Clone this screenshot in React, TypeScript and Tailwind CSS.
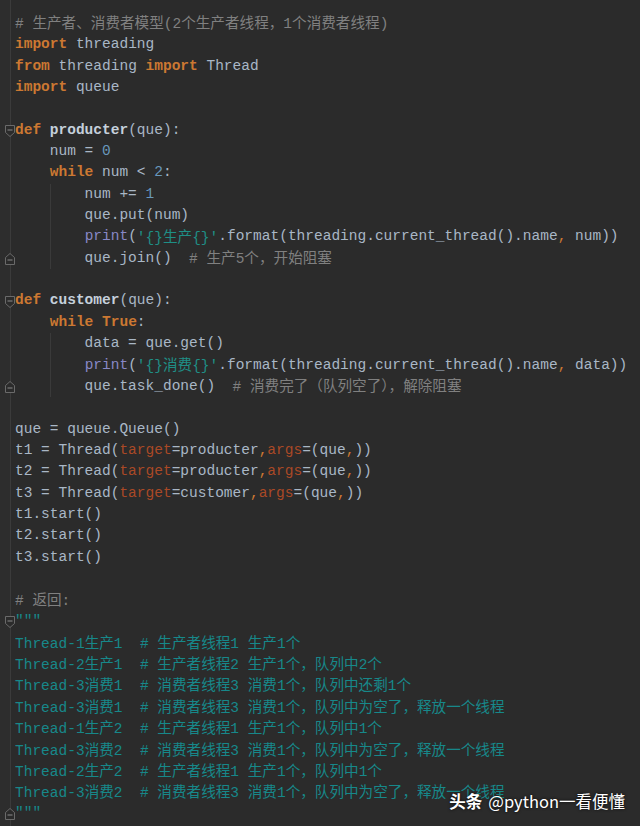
type Tok = [string, string];

// colour classes for the Darcula-like palette
const T = 'text-[#a9b7c6]';
const K = 'text-[#cc7832] font-bold';
const FN = 'text-[#c5d0db] font-bold';
const N = 'text-[#6897bb]';
const C = 'text-[#808080]';
const B = 'text-[#8888c6]';
const S = 'text-[#1f8f86]';
const A = 'text-[#aa4926]';
const D = 'text-[#17888a]';
const P = 'text-[#cc7832]';

const lines: Tok[][] = [
  [[C, '# 生产者、消费者模型(2个生产者线程，1个消费者线程)']],
  [[K, 'import'], [T, ' threading']],
  [[K, 'from'], [T, ' threading '], [K, 'import'], [T, ' Thread']],
  [[K, 'import'], [T, ' queue']],
  [],
  [[K, 'def'], [T, ' '], [FN, 'producter'], [T, '(que):']],
  [[T, '    num = '], [N, '0']],
  [[T, '    '], [K, 'while'], [T, ' num < '], [N, '2'], [T, ':']],
  [[T, '        num += '], [N, '1']],
  [[T, '        que.put(num)']],
  [[T, '        '], [B, 'print'], [T, '('], [S, "'{}生产{}'"], [T, '.format(threading.current_thread().name'], [P, ','], [T, ' num))']],
  [[T, '        que.join()  '], [C, '# 生产5个，开始阻塞']],
  [],
  [[K, 'def'], [T, ' '], [FN, 'customer'], [T, '(que):']],
  [[T, '    '], [K, 'while'], [T, ' '], [K, 'True'], [T, ':']],
  [[T, '        data = que.get()']],
  [[T, '        '], [B, 'print'], [T, '('], [S, "'{}消费{}'"], [T, '.format(threading.current_thread().name'], [P, ','], [T, ' data))']],
  [[T, '        que.task_done()  '], [C, '# 消费完了（队列空了），解除阻塞']],
  [],
  [[T, 'que = queue.Queue()']],
  [[T, 't1 = Thread('], [A, 'target'], [T, '=producter'], [P, ','], [A, 'args'], [T, '=(que'], [P, ','], [T, '))']],
  [[T, 't2 = Thread('], [A, 'target'], [T, '=producter'], [P, ','], [A, 'args'], [T, '=(que'], [P, ','], [T, '))']],
  [[T, 't3 = Thread('], [A, 'target'], [T, '=customer'], [P, ','], [A, 'args'], [T, '=(que'], [P, ','], [T, '))']],
  [[T, 't1.start()']],
  [[T, 't2.start()']],
  [[T, 't3.start()']],
  [],
  [[C, '# 返回:']],
  [[D, '"""']],
  [[D, 'Thread-1生产1  # 生产者线程1 生产1个']],
  [[D, 'Thread-2生产1  # 生产者线程2 生产1个，队列中2个']],
  [[D, 'Thread-3消费1  # 消费者线程3 消费1个，队列中还剩1个']],
  [[D, 'Thread-3消费1  # 消费者线程3 消费1个，队列中为空了，释放一个线程']],
  [[D, 'Thread-1生产2  # 生产者线程1 生产1个，队列中1个']],
  [[D, 'Thread-3消费2  # 消费者线程3 消费1个，队列中为空了，释放一个线程']],
  [[D, 'Thread-2生产2  # 生产者线程1 生产1个，队列中1个']],
  [[D, 'Thread-3消费2  # 消费者线程3 消费1个，队列中为空了，释放一个线程']],
  [[D, '"""']],
];

// fold markers: line index -> 'open' | 'close'
const folds: Record<number, 'open' | 'close'> = { 5: 'open', 11: 'close', 13: 'open', 17: 'close', 28: 'open', 37: 'close' };
const guides = new Set([8, 9, 10, 11, 15, 16, 17]);

function Run({ text }: { text: string }) {
  const parts = text.split(/([\u3000-\u9fff\uff00-\uffef]+)/);
  return (
    <>
      {parts.map((p, i) =>
        i % 2 === 1 ? (
          <span key={i} className="font-['Noto_Sans_CJK_SC',sans-serif] text-[14.6px]">
            {p}
          </span>
        ) : (
          p
        )
      )}
    </>
  );
}

function FoldMark({ kind }: { kind: 'open' | 'close' }) {
  return (
    <svg width="10" height="12" viewBox="0 0 10 12" className="absolute left-[6px] top-[5px]">
      {kind === 'open' ? (
        <path d="M0.5 0.5H9.5V7.5L5 11.5L0.5 7.5Z" fill="#2b2b2b" stroke="#6a6a6a" />
      ) : (
        <path d="M0.5 11.5H9.5V4.5L5 0.5L0.5 4.5Z" fill="#2b2b2b" stroke="#6a6a6a" />
      )}
      <path d={kind === 'open' ? 'M2.5 5H7.5' : 'M2.5 7H7.5'} stroke="#8a8a8a" />
    </svg>
  );
}

export default function App() {
  return (
    <div className="relative h-[826px] w-[640px] overflow-hidden bg-[#2b2b2b]">
      <div className="flex h-full">
        <div className="w-[11px] shrink-0 border-r border-[#3b3b3b] bg-[#2d2d2d]" />
        <div className="flex-1 pt-[13px] font-['Liberation_Mono',monospace] text-[14.5px]">
          {lines.map((toks, i) => (
            <div key={i} className="relative flex h-[21.36px] items-center whitespace-pre pl-[4px]">
              {folds[i] && (
                <div className="absolute left-[-12px] top-0 h-full w-[20px]">
                  <FoldMark kind={folds[i]} />
                </div>
              )}
              {guides.has(i) && <div className="absolute left-[39px] top-0 h-full w-px bg-[#3a3a3a]" />}
              {toks.map(([cls, text], j) => (
                <span key={j} className={cls}>
                  <Run text={text} />
                </span>
              ))}
            </div>
          ))}
        </div>
      </div>
      <div className="absolute bottom-[17px] right-[15px] flex items-center gap-[6px] font-['Noto_Sans_CJK_SC',sans-serif] text-[16.5px] leading-none text-white [text-shadow:0_0_3px_rgba(0,0,0,0.9)]">
        <span className="font-bold">头条</span>
        <span>@python一看便懂</span>
      </div>
    </div>
  );
}
